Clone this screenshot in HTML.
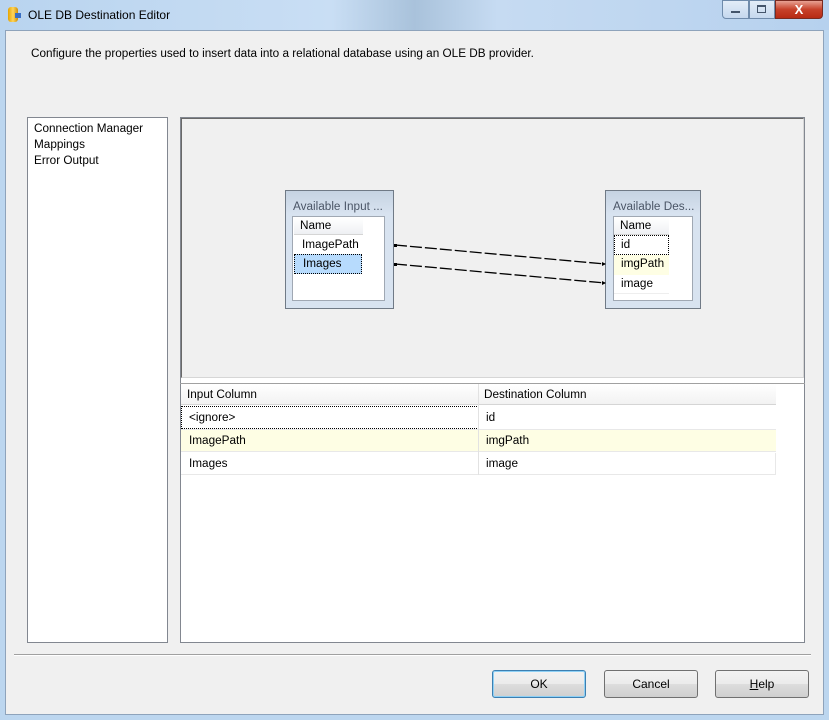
<!DOCTYPE html><html><head><style>
*{margin:0;padding:0;box-sizing:border-box}
body{width:829px;height:720px;position:relative;overflow:hidden;background:#bcd6ef;font-family:"Liberation Sans",sans-serif;font-size:11.75px;color:#000}
.a{position:absolute}
.btn{position:absolute;top:670px;width:94px;height:28px;border:1px solid #707070;border-radius:3px;background:linear-gradient(#f2f2f2,#ebebeb 50%,#dddddd 51%,#cfcfcf);text-align:center;line-height:26px;font-size:12px}
</style></head><body>
<div class="a" style="left:0;top:0;width:829px;height:30px;background:linear-gradient(90deg,#b9d4ef,#c9def4 40%,#a9c2db 50%,#c6dbf2 60%,#b6d1ee)"></div>
<div class="a" style="left:8px;top:7px;width:10px;height:15px;background:linear-gradient(90deg,#e5a400,#ffd55c,#d08e00);border-radius:3px"></div>
<div class="a" style="left:15px;top:13px;width:6px;height:5px;background:#3a6fc4"></div>
<div class="a" style="left:28px;top:8px;font-size:12px">OLE DB Destination Editor</div>
<div class="a" style="left:722px;top:0;width:27px;height:19px;border:1px solid #6f8bab;border-radius:0 0 0 4px;background:linear-gradient(#e3edf8,#c5d8ee)"></div>
<div class="a" style="left:731px;top:11px;width:9px;height:2px;background:#44556b"></div>
<div class="a" style="left:749px;top:0;width:26px;height:19px;border:1px solid #6f8bab;background:linear-gradient(#e3edf8,#c5d8ee)"></div>
<div class="a" style="left:757px;top:5px;width:9px;height:8px;border:2px solid #44556b;border-width:2px 1px 1px"></div>
<div class="a" style="left:775px;top:0;width:48px;height:19px;border:1px solid #7a2a20;border-radius:0 0 4px 0;background:linear-gradient(#e8a193,#c7412a 50%,#b72a14);color:#fff;font-weight:bold;text-align:center;line-height:17px;font-size:13px">X</div>
<div class="a" style="left:5px;top:30px;width:819px;height:685px;background:#f0f0f0;border:1px solid #8ea3bb"></div>
<div class="a" style="left:31px;top:47px">Configure the properties used to insert data into a relational database using an OLE DB provider.</div>
<div class="a" style="left:27px;top:117px;width:141px;height:526px;background:#fff;border:1px solid #828790;line-height:16px;padding:3px 6px">Connection Manager<br>Mappings<br>Error Output</div>
<div class="a" style="left:180px;top:117px;width:625px;height:526px;background:#fff;border:1px solid #828790"></div>
<div class="a" style="left:181px;top:118px;width:623px;height:260px;background:#f0f0f0;border-right:1px solid #d6d6d6;border-bottom:1px solid #d6d6d6;border-top:1px solid #696969;border-left:1px solid #696969"></div>
<div class="a" style="left:285px;top:190px;width:109px;height:119px;border:1px solid #707a86;background:linear-gradient(#c6d3e2,#d8e3f0 20%,#d8e3f0)"></div>
<div class="a" style="left:293px;top:200px;color:#4a5566">Available Input ...</div>
<div class="a" style="left:292px;top:216px;width:93px;height:85px;background:#fff;border:1px solid #a0a8b3"></div>
<div class="a" style="left:294px;top:218px;width:69px;height:17px;background:linear-gradient(#fff,#eef0f3);border-bottom:1px solid #d5d5d5;padding-left:6px;line-height:16px">Name</div>
<div class="a" style="left:302px;top:238px">ImagePath</div>
<div class="a" style="left:294px;top:254px;width:68px;height:20px;background:#b7dbfd;border:1px dotted #000;padding-left:8px;line-height:18px">Images</div>
<div class="a" style="left:605px;top:190px;width:96px;height:119px;border:1px solid #707a86;background:linear-gradient(#c6d3e2,#d8e3f0 20%,#d8e3f0)"></div>
<div class="a" style="left:613px;top:200px;color:#4a5566">Available Des...</div>
<div class="a" style="left:613px;top:216px;width:80px;height:85px;background:#fff;border:1px solid #a0a8b3"></div>
<div class="a" style="left:614px;top:218px;width:55px;height:17px;background:linear-gradient(#fff,#eef0f3);border-bottom:1px solid #d5d5d5;padding-left:6px;line-height:16px">Name</div>
<div class="a" style="left:614px;top:235px;width:55px;height:20px;border:1px dotted #000;padding-left:6px;line-height:18px">id</div>
<div class="a" style="left:614px;top:255px;width:55px;height:20px;background:#fefee4;padding-left:7px;line-height:18px">imgPath</div>
<div class="a" style="left:614px;top:275px;width:55px;height:19px;padding-left:7px;line-height:17px;border-bottom:1px solid #eee">image</div>
<svg class="a" style="left:0;top:0" width="829" height="720"><g stroke="#000" stroke-width="1.3" stroke-dasharray="12,3" fill="none"><line x1="395" y1="245" x2="605" y2="264"/><line x1="395" y1="264" x2="605" y2="283"/></g><g fill="#000"><rect x="394" y="244" width="3" height="3"/><rect x="394" y="263" width="3" height="3"/><path d="M606 264l-4-2v4z"/><path d="M606 283l-4-2v4z"/></g></svg>
<div class="a" style="left:180px;top:383px;width:625px;height:1px;background:#a0a0a0"></div>
<div class="a" style="left:181px;top:384px;width:595px;height:21px;background:linear-gradient(#fff,#f2f2f2);border-bottom:1px solid #d5d5d5"></div>
<div class="a" style="left:478px;top:384px;width:1px;height:91px;background:#e2e2e2"></div>
<div class="a" style="left:187px;top:388px">Input Column</div>
<div class="a" style="left:484px;top:388px">Destination Column</div>
<div class="a" style="left:181px;top:406px;width:298px;height:23px;border:1px dotted #000"></div>
<div class="a" style="left:189px;top:411px">&lt;ignore&gt;</div>
<div class="a" style="left:486px;top:411px">id</div>
<div class="a" style="left:181px;top:429px;width:595px;height:1px;background:#e8e8e8"></div>
<div class="a" style="left:181px;top:430px;width:595px;height:22px;background:#fefee4;border-bottom:1px solid #e8e8e8"></div>
<div class="a" style="left:189px;top:434px">ImagePath</div>
<div class="a" style="left:486px;top:434px">imgPath</div>
<div class="a" style="left:181px;top:453px;width:595px;height:22px;border-bottom:1px solid #e8e8e8;border-right:1px solid #e8e8e8"></div>
<div class="a" style="left:189px;top:457px">Images</div>
<div class="a" style="left:486px;top:457px">image</div>
<div class="a" style="left:478px;top:406px;width:1px;height:69px;background:#e2e2e2"></div>
<div class="a" style="left:14px;top:654px;width:797px;height:2px;border-top:1px solid #a0a0a0;border-bottom:1px solid #fff"></div>
<div class="btn" style="left:492px;border-color:#3c7fb1;box-shadow:inset 0 0 0 1px #8ed0f5">OK</div>
<div class="btn" style="left:604px">Cancel</div>
<div class="btn" style="left:715px"><u>H</u>elp</div>
</body></html>
